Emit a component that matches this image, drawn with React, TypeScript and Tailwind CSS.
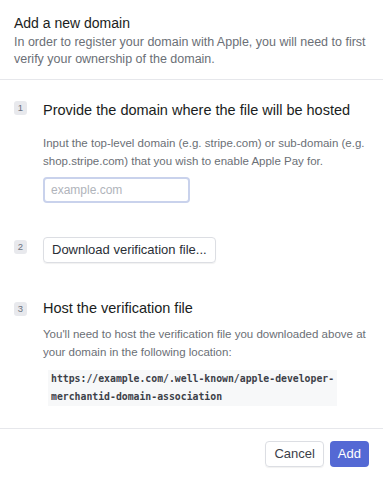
import React from "react";

function Badge({ n }: { n: string }) {
  return (
    <div className="w-[13px] h-[14px] rounded-[3px] bg-[#e8e9ed] text-[9.5px] leading-[14px] text-[#6b7280] text-center shrink-0">
      {n}
    </div>
  );
}

export default function App() {
  return (
    <div className="w-[383px] h-[478px] bg-white text-[#1a1f36] flex flex-col font-['Liberation_Sans',Arial,sans-serif]">
      <div className="px-[14px] pt-[13px] h-[80px] border-b border-[#e6e7eb] shrink-0">
        <div className="text-[14px] leading-[20px] text-[#1a1d21]">Add a new domain</div>
        <div className="text-[12.5px] leading-[17px] text-[#6b6f76] mt-[1px]">
          In order to register your domain with Apple, you will need to first verify your ownership of the domain.
        </div>
      </div>
      <div className="flex-1 border-b border-[#e6e7eb] px-[14px] pt-[21px]">
        <div className="flex gap-[16px]">
          <div><Badge n="1" /></div>
          <div className="flex-1">
            <div className="text-[14.5px] leading-[20px] text-[#1a1d21] -mt-[1px]">Provide the domain where the file will be hosted</div>
            <div className="text-[11.5px] leading-[18px] text-[#6b6f76] mt-[14px]">
              Input the top-level domain (e.g. stripe.com) or sub-domain (e.g. shop.stripe.com) that you wish to enable Apple Pay for.
            </div>
            <div className="mt-[7px] w-[147px] h-[26px] rounded-[4px] border-2 border-[#c9d2ec] px-[6px] flex items-center text-[12px] text-[#b0b4bb]">
              example.com
            </div>
          </div>
        </div>
        <div className="flex gap-[16px] mt-[34px] items-start">
          <div className="pt-[3px]"><Badge n="2" /></div>
          <div className="h-[26px] px-[8px] rounded-[4px] border border-[#dcdee3] shadow-[0_1px_1px_rgba(0,0,0,0.06)] flex items-center text-[13px] text-[#2a2f36]">
            Download verification file...
          </div>
        </div>
        <div className="flex gap-[16px] mt-[35px]">
          <div className="pt-[4px]"><Badge n="3" /></div>
          <div className="flex-1">
            <div className="text-[14.5px] leading-[20px] text-[#1a1d21]">Host the verification file</div>
            <div className="text-[11.5px] leading-[18px] text-[#6b6f76] mt-[7px]">
              You'll need to host the verification file you downloaded above at your domain in the following location:
            </div>
            <div className="mt-[9px] ml-[5px] px-[3px] bg-[#f7f8f9] text-[9.8px] leading-[18px] font-bold text-[#3c4048] w-fit font-['DejaVu_Sans_Mono','Liberation_Mono',monospace]">
              https://example.com/.well-known/apple-developer-<br />merchantid-domain-association
            </div>
          </div>
        </div>
      </div>
      <div className="h-[49px] shrink-0 flex items-center justify-end gap-[6px] pr-[14px]">
        <div className="h-[26px] px-[8px] rounded-[4px] border border-[#dcdee3] shadow-[0_1px_1px_rgba(0,0,0,0.06)] flex items-center text-[13px] text-[#3c4048]">Cancel</div>
        <div className="h-[26px] px-[8px] rounded-[4px] bg-[#5469d4] flex items-center text-[13px] text-white">Add</div>
      </div>
    </div>
  );
}
